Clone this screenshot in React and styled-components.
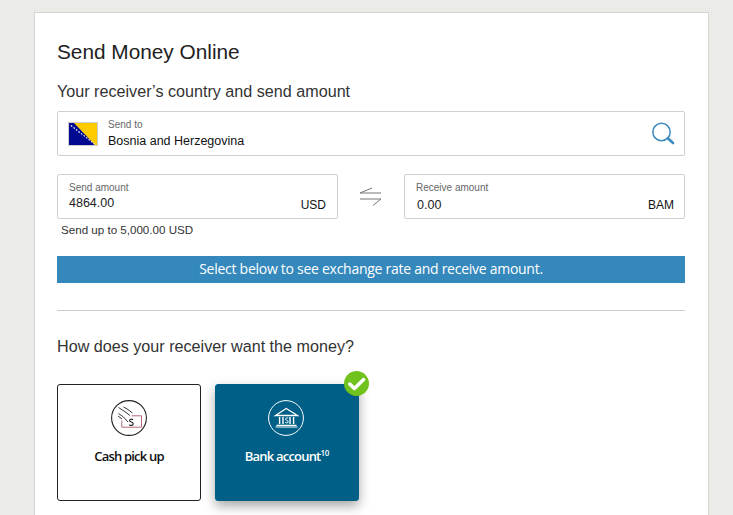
import React from 'react'
import styled, {createGlobalStyle} from 'styled-components'

const GlobalStyle = createGlobalStyle`
    html, body {
        margin: 0;
        height: 515px;
        overflow: hidden;
        background: #ebebe7;
        font-family: "Liberation Sans", Arial, sans-serif;
    }
`

// --------------- Basic Styling -------------------
const Card = styled.main`
    box-sizing: border-box;
    width: 675px;
    height: 560px;
    margin: 12px 0 0 34px;
    padding: 27px 23px 0 22px;
    background: #fff;
    border: 1px solid #d5d5d5;
`
const Title = styled.h1`
    margin: 0;
    font-size: 20.8px;
    line-height: 24px;
    font-weight: 400;
    color: #222;
`
const SubTitle = styled.h2`
    margin: ${props => props.$top} 0 0 0;
    font-size: 16.15px;
    line-height: 20px;
    font-weight: 400;
    color: #333;
`
const Field = styled.div`
    box-sizing: border-box;
    height: 45px;
    display: flex;
    align-items: center;
    background: #fff;
    border: 1px solid #d0d0d0;
    border-radius: 2px;
`
const SearchField = styled(Field)`
    margin-top: 10px;
    padding: 0 9px 0 10px;
`
const Flag = styled.svg`
    width: 30px;
    height: 24px;
    flex: none;
    margin-right: 10px;
`
const FieldText = styled.div`
    flex: 1;
    display: flex;
    flex-direction: column;
    padding-top: 1px;
`
const Caption = styled.span`
    font-size: 10px;
    line-height: 12px;
    color: #666;
`
const CountryName = styled.span`
    font-size: 12.5px;
    line-height: 16px;
    margin-top: 2px;
    color: #111;
`
const AmountRow = styled.div`
    display: flex;
    align-items: center;
    margin-top: 18px;
`
const AmountField = styled(Field)`
    width: 281px;
    flex-direction: column;
    align-items: stretch;
    padding: 7px ${props => props.$right}px 0 11px;
`
const AmountLine = styled.div`
    display: flex;
    justify-content: space-between;
    align-items: flex-end;
    height: 16px;
`
const AmountValue = styled.span`
    font-size: 12.5px;
    line-height: 16px;
    margin-bottom: -${props => props.$drop}px;
    padding-left: ${props => props.$inset || 0}px;
    color: #222;
`
const Currency = styled.span`
    font-size: 12px;
    line-height: 14px;
    margin-bottom: -2px;
    color: #111;
`
const Swap = styled.div`
    flex: 1;
    display: flex;
    justify-content: center;
    color: #777;
`
const Limit = styled.div`
    margin: 4px 0 0 4px;
    font-size: 11.6px;
    line-height: 14px;
    color: #333;
`
const Banner = styled.div`
    height: 27px;
    margin-top: 19px;
    background: #3588bc;
    color: #fff;
    font-family: "Open Sans", sans-serif;
    font-size: 14px;
    line-height: 26px;
    letter-spacing: -0.27px;
    text-align: center;
`
const Divider = styled.hr`
    margin: 27px 0 0 0;
    border: none;
    border-top: 1px solid #ccc;
`
const Tiles = styled.div`
    display: flex;
    gap: 14px;
    margin-top: 28px;
`
const Tile = styled.div`
    position: relative;
    box-sizing: border-box;
    width: 144px;
    height: 117px;
    display: flex;
    flex-direction: column;
    align-items: center;
    padding-top: 15px;
    border-radius: 3px;
    border: 1px solid ${props => props.$selected ? '#005f87' : '#222'};
    background: ${props => props.$selected ? '#005f87' : '#fff'};
    color: ${props => props.$selected ? '#fff' : '#111'};
    box-shadow: ${props => props.$selected ? '0 5px 12px rgba(0,0,0,0.35)' : 'none'};
`
const TileIcon = styled.svg`
    flex: none;
    margin-right: ${props => props.$shift || 0}px;
`
const TileLabel = styled.div`
    margin-top: 11px;
    font-family: "Open Sans", sans-serif;
    font-size: 13px;
    line-height: 18px;
    font-weight: 600;
    letter-spacing: -0.8px;

    sup {
        font-size: 8px;
        line-height: 0;
        letter-spacing: -0.2px;
        vertical-align: 5px;
    }
`
const Check = styled.svg`
    position: absolute;
    top: -14px;
    right: -11px;
    width: 25px;
    height: 25px;
`

// --------------- Drawings -------------------
const BosniaFlag = () => (
    <Flag viewBox="0 0 30 24">
        <rect x="0.5" y="0.5" width="29" height="23" fill="#fff" stroke="#ccc" />
        <rect x="1" y="1" width="28" height="22" fill="#00098f" />
        <polygon points="6,1 29,1 29,23 27,23" fill="#fecb00" />
        <path d="M3 3.5 L27 22.5" stroke="#fff" strokeWidth="1.1" strokeDasharray="1.6 1.6" />
    </Flag>
)

const SearchIcon = () => (
    <svg width="24" height="24" viewBox="0 0 24 24" fill="none">
        <circle cx="10.5" cy="10" r="8.7" stroke="#3d8cc0" strokeWidth="1.5" />
        <path d="M16.8 16.2 L22 21" stroke="#3d8cc0" strokeWidth="2.6" strokeLinecap="round" />
    </svg>
)

const SwapIcon = () => (
    <svg width="22" height="20" viewBox="0 0 22 20" fill="none" stroke="currentColor" strokeWidth="1">
        <path d="M0 6 H21 M0 6 L12 1" />
        <path d="M0 12 H21 M21 12 L13 18.5" />
    </svg>
)

const CashIcon = () => (
    <TileIcon width="36" height="36" viewBox="0 0 36 36" fill="none">
        <circle cx="18" cy="18" r="17.4" stroke="#222" strokeWidth="1.1" />
        <path d="M10.8 20.5 V27.2 H30.5 V15.8 H20.5" stroke="#b05a66" strokeWidth="0.9" />
        <path d="M7.5 7.5 L13 11 L19 15.5 M12.5 7 L17 9.5 L21.5 13 M7.5 13.5 L12.5 17 L17 22 M7 16 L11 19" stroke="#222" strokeWidth="0.9" />
        <path d="M22 19.8 C20.8 18.8 18.4 19 18.6 20.6 C18.8 22.2 22.2 21.8 22.2 23.8 C22.2 25.8 19.4 25.8 18.2 24.8" stroke="#222" strokeWidth="1.2" />
    </TileIcon>
)

const BankIcon = () => (
    <TileIcon $shift={2} width="36" height="36" viewBox="0 0 36 36" fill="none" stroke="#fff">
        <circle cx="18" cy="18" r="17.4" strokeWidth="1" />
        <path d="M7.5 15.5 L18.2 8.5 L29.5 15.5 Z" strokeWidth="1.3" />
        <path d="M11.6 17 V24 M15 17 V24 M22 17 V24 M25.6 17 V24" strokeWidth="1.4" />
        <path d="M8.5 25.4 H28.5 M7.5 27 H29.5" strokeWidth="1.1" />
        <path d="M20.2 18.2 C19.3 17.6 17.4 17.8 17.6 19.2 C17.8 20.6 20.2 20.2 20.2 21.8 C20.2 23.1 18.1 23.1 17.3 22.4" strokeWidth="1" />
    </TileIcon>
)

const CheckBadge = () => (
    <Check viewBox="0 0 26 26">
        <circle cx="13" cy="13" r="13" fill="#72c21e" />
        <path d="M6 13.5 L10.8 18.2 L20.4 8.8" fill="none" stroke="#fff" strokeWidth="3.6" strokeLinecap="round" strokeLinejoin="round" />
    </Check>
)

const App = () => {
    return (
        <>
            <GlobalStyle />
            <Card>
                <Title>Send Money Online</Title>
                <SubTitle $top="17px">Your receiver’s country and send amount</SubTitle>

                <SearchField>
                    <BosniaFlag />
                    <FieldText>
                        <Caption>Send to</Caption>
                        <CountryName>Bosnia and Herzegovina</CountryName>
                    </FieldText>
                    <SearchIcon />
                </SearchField>

                <AmountRow>
                    <AmountField $right={11}>
                        <Caption>Send amount</Caption>
                        <AmountLine>
                            <AmountValue $drop={1}>4864.00</AmountValue>
                            <Currency>USD</Currency>
                        </AmountLine>
                    </AmountField>
                    <Swap><SwapIcon /></Swap>
                    <AmountField $right={10}>
                        <Caption>Receive amount</Caption>
                        <AmountLine>
                            <AmountValue $drop={3} $inset={1}>0.00</AmountValue>
                            <Currency>BAM</Currency>
                        </AmountLine>
                    </AmountField>
                </AmountRow>
                <Limit>Send up to 5,000.00 USD</Limit>

                <Banner>Select below to see exchange rate and receive amount.</Banner>
                <Divider />

                <SubTitle $top="25px">How does your receiver want the money?</SubTitle>

                <Tiles>
                    <Tile>
                        <CashIcon />
                        <TileLabel>Cash pick up</TileLabel>
                    </Tile>
                    <Tile $selected>
                        <BankIcon />
                        <TileLabel>Bank account<sup>10</sup></TileLabel>
                        <CheckBadge />
                    </Tile>
                </Tiles>
            </Card>
        </>
    )
}

export default App
